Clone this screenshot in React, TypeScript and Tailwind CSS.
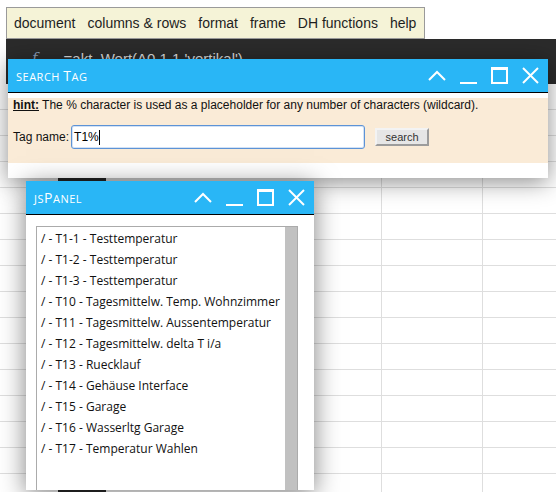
import React from "react";

const ChevronUp = () => (
  <svg width="18" height="17" viewBox="0 0 18 17">
    <polyline points="1,13 9,5 17,13" fill="none" stroke="white" strokeWidth="2" />
  </svg>
);
const Minimize = () => (
  <svg width="17" height="17" viewBox="0 0 17 17">
    <rect x="0" y="15" width="17" height="2" fill="white" />
  </svg>
);
const Maximize = () => (
  <svg width="17" height="17" viewBox="0 0 17 17">
    <rect x="1" y="1.5" width="15" height="14.5" fill="none" stroke="white" strokeWidth="2" />
    <rect x="0" y="0" width="17" height="3" fill="white" />
  </svg>
);
const Close = () => (
  <svg width="17" height="17" viewBox="0 0 17 17">
    <line x1="1" y1="1" x2="16" y2="16" stroke="white" strokeWidth="2" />
    <line x1="16" y1="1" x2="1" y2="16" stroke="white" strokeWidth="2" />
  </svg>
);

const Controls = () => (
  <div className="flex items-center gap-[14px] pr-[9px]">
    <ChevronUp />
    <Minimize />
    <Maximize />
    <Close />
  </div>
);

const Title = ({ parts }: { parts: [string, boolean][] }) => (
  <div
    className="pl-[8px] text-white tracking-[0.5px] flex items-baseline whitespace-pre"
    style={{ fontFamily: "'Open Sans', sans-serif" }}
  >
    {parts.map(([t, big], i) => (
      <span key={i} className={big ? "text-[14px]" : "text-[11px]"}>
        {t}
      </span>
    ))}
  </div>
);

const items = [
  "/ - T1-1 - Testtemperatur",
  "/ - T1-2 - Testtemperatur",
  "/ - T1-3 - Testtemperatur",
  "/ - T10 - Tagesmittelw. Temp. Wohnzimmer",
  "/ - T11 - Tagesmittelw. Aussentemperatur",
  "/ - T12 - Tagesmittelw. delta T i/a",
  "/ - T13 - Ruecklauf",
  "/ - T14 - Gehäuse Interface",
  "/ - T15 - Garage",
  "/ - T16 - Wasserltg Garage",
  "/ - T17 - Temperatur Wahlen",
];

const menu = ["document", "columns & rows", "format", "frame", "DH functions", "help"];

export default function App() {
  return (
    <div
      className="relative w-[556px] h-[492px] overflow-hidden bg-white"
      style={{ fontFamily: "'Liberation Sans', Arial, sans-serif" }}
    >
      {/* background application */}
      <div className="pt-[7px] pl-[6px]">
        <div className="w-fit h-[32px] flex items-center bg-[#f5f3d7] border border-[#9a9a9a] pl-px pr-[2px] text-[14px] text-[#1e1e1e]">
          {menu.map((m) => (
            <span key={m} className="px-[6px]">
              {m}
            </span>
          ))}
        </div>
      </div>
      <div className="ml-[6px] h-[45px] bg-[#2b2b2b] flex pt-[12px] leading-[15px] text-[15px]">
        <span className="ml-[26px] italic text-[#8a9bb5]" style={{ fontFamily: "'DejaVu Serif', serif" }}>
          f
        </span>
        <span className="ml-[26px] text-[#dcdcdc]">=akt_Wert(A0,1,1,'vertikal')</span>
      </div>
      <div>
        {Array.from({ length: 16 }).map((_, r) => (
          <div key={r} className="flex h-[26px] border-b border-[#dedede]">
            <div className="w-[58px]" />
            <div className="w-[48px] bg-[#2b2b2b]" />
            <div className="w-[276px] border-r border-[#dedede]" />
            <div className="w-[101px] border-r border-[#dedede]" />
            <div className="flex-1" />
          </div>
        ))}
      </div>

      {/* Search Tag panel */}
      <div className="absolute left-[8px] top-[59px] w-[540px] h-[119px] bg-white shadow-[0_4px_22px_rgba(0,0,0,0.45)]">
        <div className="h-[34px] bg-[#29b6f6] border-b border-black flex items-center justify-between">
          <Title parts={[["SEARCH\u00a0", false], ["T", true], ["AG", false]]} />
          <Controls />
        </div>
        <div className="pt-[5px]">
          <div className="bg-[#faebd7] px-[5px] pb-[14px] text-[12px] text-[#111]">
            <div className="leading-[14px]">
              <span className="font-bold underline">hint:</span> The % character is used as a placeholder
              for any number of characters (wildcard).
            </div>
            <div className="mt-[13px] h-[24px] flex items-center">
              <span>Tag name:</span>
              <div className="ml-[2px] w-[294px] h-[24px] border border-[#5d93d6] rounded-[3px] bg-white flex items-center pl-[2px] shadow-[inset_0_0_0_1px_#d3e2f5]">
                <span className="text-[12px] text-black">T1%</span>
                <span className="w-px h-[15px] bg-black" />
              </div>
              <div className="ml-[10px] w-[54px] h-[18px] bg-[#e6e6e6] border-2 border-t-[#f3f3f3] border-l-[#f3f3f3] border-r-[#9c9c9c] border-b-[#9c9c9c] flex items-center justify-center text-[11px] text-[#333]">
                search
              </div>
            </div>
          </div>
        </div>
      </div>

      {/* jsPanel */}
      <div className="absolute left-[26px] top-[181px] w-[288px] h-[309px] bg-white overflow-hidden shadow-[0_4px_24px_rgba(0,0,0,0.5)]">
        <div className="h-[34px] bg-[#29b6f6] border-b border-black flex items-center justify-between">
          <Title parts={[["JS", false], ["P", true], ["ANEL", false]]} />
          <Controls />
        </div>
        <div className="pt-[11px] pl-[10px]">
          <div className="w-[262px] h-[300px] border border-[#ababab] flex">
            <div
              className="flex-1 pl-[4px] pt-[1px] text-[12px] leading-[21px] text-[#111]"
              style={{ fontFamily: "'Open Sans', sans-serif" }}
            >
              {items.map((it) => (
                <div key={it} className="whitespace-nowrap">
                  {it}
                </div>
              ))}
            </div>
            <div className="w-[12px] bg-[#c1c1c1]" />
          </div>
        </div>
      </div>
    </div>
  );
}
